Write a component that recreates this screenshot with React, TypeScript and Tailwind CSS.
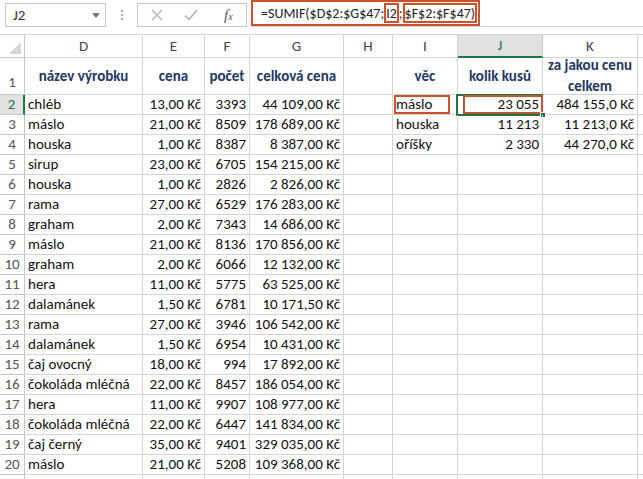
import React from 'react';

const font = { fontFamily: 'Carlito, Lato, "Liberation Sans", sans-serif' };

const colLetters = ['D', 'E', 'F', 'G', 'H', 'I', 'J', 'K'];
const colWidths = ['w-[118px]', 'w-[62px]', 'w-[45px]', 'w-[94px]', 'w-[49px]', 'w-[65px]', 'w-[85px]', 'w-[95px]'];

// each row: D, E, F, G, I, J, K
const rows: string[][] = [
    ['chléb', '13,00 Kč', '3393', '44 109,00 Kč', 'máslo', '23 055', '484 155,0 Kč'],
    ['máslo', '21,00 Kč', '8509', '178 689,00 Kč', 'houska', '11 213', '11 213,0 Kč'],
    ['houska', '1,00 Kč', '8387', '8 387,00 Kč', 'oříšky', '2 330', '44 270,0 Kč'],
    ['sirup', '23,00 Kč', '6705', '154 215,00 Kč', '', '', ''],
    ['houska', '1,00 Kč', '2826', '2 826,00 Kč', '', '', ''],
    ['rama', '27,00 Kč', '6529', '176 283,00 Kč', '', '', ''],
    ['graham', '2,00 Kč', '7343', '14 686,00 Kč', '', '', ''],
    ['máslo', '21,00 Kč', '8136', '170 856,00 Kč', '', '', ''],
    ['graham', '2,00 Kč', '6066', '12 132,00 Kč', '', '', ''],
    ['hera', '11,00 Kč', '5775', '63 525,00 Kč', '', '', ''],
    ['dalamánek', '1,50 Kč', '6781', '10 171,50 Kč', '', '', ''],
    ['rama', '27,00 Kč', '3946', '106 542,00 Kč', '', '', ''],
    ['dalamánek', '1,50 Kč', '6954', '10 431,00 Kč', '', '', ''],
    ['čaj ovocný', '18,00 Kč', '994', '17 892,00 Kč', '', '', ''],
    ['čokoláda mléčná', '22,00 Kč', '8457', '186 054,00 Kč', '', '', ''],
    ['hera', '11,00 Kč', '9907', '108 977,00 Kč', '', '', ''],
    ['čokoláda mléčná', '22,00 Kč', '6447', '141 834,00 Kč', '', '', ''],
    ['čaj černý', '35,00 Kč', '9401', '329 035,00 Kč', '', '', ''],
    ['máslo', '21,00 Kč', '5208', '109 368,00 Kč', '', '', ''],
];

const cell = 'h-full shrink-0 border-r border-b border-[#d4d4d4] px-[3px] flex items-center';

function FormulaBar() {
    return (
        <div className="h-[34px] flex items-start relative">
            {/* name box */}
            <div className="ml-[5px] mt-[3px] w-[101px] h-[24px] border border-[#c6c6c6] flex items-center justify-between pl-[7px] pr-[5px] text-[15px] text-[#333]">
                <span>J2</span>
                <svg width="8" height="5" viewBox="0 0 8 5"><path d="M0 0 L8 0 L4 5 Z" fill="#777" /></svg>
            </div>
            <div className="w-[31px] h-[30px] flex flex-col items-center justify-center gap-[2px]">
                <span className="w-[2px] h-[2px] bg-[#aaa]" />
                <span className="w-[2px] h-[2px] bg-[#aaa]" />
                <span className="w-[2px] h-[2px] bg-[#aaa]" />
            </div>
            {/* cancel / enter / fx */}
            <div className="mt-[3px] w-[110px] h-[24px] border border-[#c6c6c6] flex items-center pl-[13px]">
                <svg width="12" height="12" viewBox="0 0 12 12" className="mr-[21px]">
                    <path d="M1 1 L11 11 M11 1 L1 11" stroke="#b5b5b5" strokeWidth="1.4" />
                </svg>
                <svg width="14" height="12" viewBox="0 0 14 12" className="mr-[26px]">
                    <path d="M1 6.5 L5 10.5 L13 1" stroke="#b5b5b5" strokeWidth="1.6" fill="none" />
                </svg>
                <span className="italic text-[#555] text-[15px] leading-none" style={{ fontFamily: '"Liberation Serif", serif' }}>
                    f<span className="text-[10px]">x</span>
                </span>
            </div>
            {/* formula input */}
            <div className="ml-[4px] flex-1 h-[27px] border-b border-[#d4d4d4] relative">
                <div className="w-[229px] h-[26px] border-2 border-[#d0502c] flex items-center pl-[8px] text-[14px] text-[#222] whitespace-nowrap">
                    <span>=SUMIF($D$2:$G$47;</span>
                    <span className="border-2 border-[#d0502c] h-[20px] flex items-center">I2</span>
                    <span>;</span>
                    <span className="border-2 border-[#d0502c] h-[20px] flex items-center">$F$2:$F$47)</span>
                </div>
            </div>
        </div>
    );
}

function HeaderRow() {
    return (
        <div className="flex h-[24px] border-t border-[#d4d4d4]">
            <div className="w-[25px] shrink-0 h-full border-r border-b border-[#c6c6c6] relative">
                <svg width="12" height="12" viewBox="0 0 12 12" className="absolute right-[3px] bottom-[3px]">
                    <path d="M12 0 L12 12 L0 12 Z" fill="#d6d6d6" />
                </svg>
            </div>
            {colLetters.map((l, i) => (
                <div
                    key={l}
                    className={`${colWidths[i]} shrink-0 h-full flex items-center justify-center text-[15px] border-r ${
                        l === 'J'
                            ? 'bg-[#e1e1e1] text-[#217346] border-b-2 border-b-[#217346] border-r-[#c6c6c6]'
                            : 'text-[#444] border-b border-[#d4d4d4]'
                    }`}
                >
                    {l}
                </div>
            ))}
            <div className="flex-1 h-full border-b border-[#d4d4d4]" />
        </div>
    );
}

function TitleRow() {
    const head = 'text-[#1f3864] font-bold justify-center whitespace-nowrap';
    return (
        <div className="flex h-[37px]">
            <div className="w-[25px] shrink-0 h-full border-r border-b border-[#c6c6c6] flex items-end justify-center pb-[1px] text-[15px] text-[#555]">1</div>
            <div className={`${cell} w-[118px] ${head}`}>název výrobku</div>
            <div className={`${cell} w-[62px] ${head}`}>cena</div>
            <div className={`${cell} w-[45px] ${head}`}>počet</div>
            <div className={`${cell} w-[94px] ${head}`}>celková cena</div>
            <div className={`${cell} w-[49px]`} />
            <div className={`${cell} w-[65px] ${head}`}>věc</div>
            <div className={`${cell} w-[85px] ${head}`}>kolik kusů</div>
            <div className={`${cell} w-[95px] text-[#1f3864] font-bold justify-center text-center leading-[21px]`}>
                <span>za jakou cenu<br />celkem</span>
            </div>
            <div className="flex-1 h-full border-b border-[#d4d4d4]" />
        </div>
    );
}

function DataRow({ n, r }: { n: number; r: string[] }) {
    const selected = n === 2;
    return (
        <div className="flex h-[20px] shrink-0 whitespace-nowrap">
            <div
                className={`w-[25px] shrink-0 h-full border-b flex items-center justify-center text-[15px] ${
                    selected
                        ? 'bg-[#e1e1e1] text-[#217346] border-r-2 border-r-[#217346] border-b-[#c6c6c6]'
                        : 'text-[#555] border-r border-[#c6c6c6]'
                }`}
            >
                {n}
            </div>
            <div className={`${cell} w-[118px]`}>{r[0]}</div>
            <div className={`${cell} w-[62px] justify-end`}>{r[1]}</div>
            <div className={`${cell} w-[45px] justify-end`}>{r[2]}</div>
            <div className={`${cell} w-[94px] justify-end`}>{r[3]}</div>
            <div className={`${cell} w-[49px]`} />
            <div className={`${cell} w-[65px] relative`}>
                {r[4]}
                {selected && <div className="absolute left-[1px] top-0 w-[56px] h-[19px] border-2 border-[#d0502c]" />}
            </div>
            <div className={`${cell} w-[85px] justify-end relative`}>
                {r[5]}
                {selected && (
                    <>
                        <div className="absolute left-[-2px] top-[-1px] w-[87px] h-[22px] border-2 border-[#217346]" />
                        <div className="absolute left-[5px] top-0 w-[80px] h-[19px] border-2 border-[#c0552f]" />
                        <div className="absolute right-[-4px] bottom-[-4px] w-[6px] h-[6px] bg-[#217346] border border-white" />
                    </>
                )}
            </div>
            <div className={`${cell} w-[95px] justify-end`}>{r[6]}</div>
            <div className="flex-1 h-full border-b border-[#d4d4d4]" />
        </div>
    );
}

export default function App() {
    return (
        <div className="w-[643px] h-[479px] overflow-hidden bg-white text-[15px] text-[#111]" style={font}>
            <FormulaBar />
            <HeaderRow />
            <TitleRow />
            {rows.map((r, i) => (
                <DataRow key={i} n={i + 2} r={r} />
            ))}
            <DataRow n={21} r={['', '', '', '', '', '', '']} />
        </div>
    );
}
